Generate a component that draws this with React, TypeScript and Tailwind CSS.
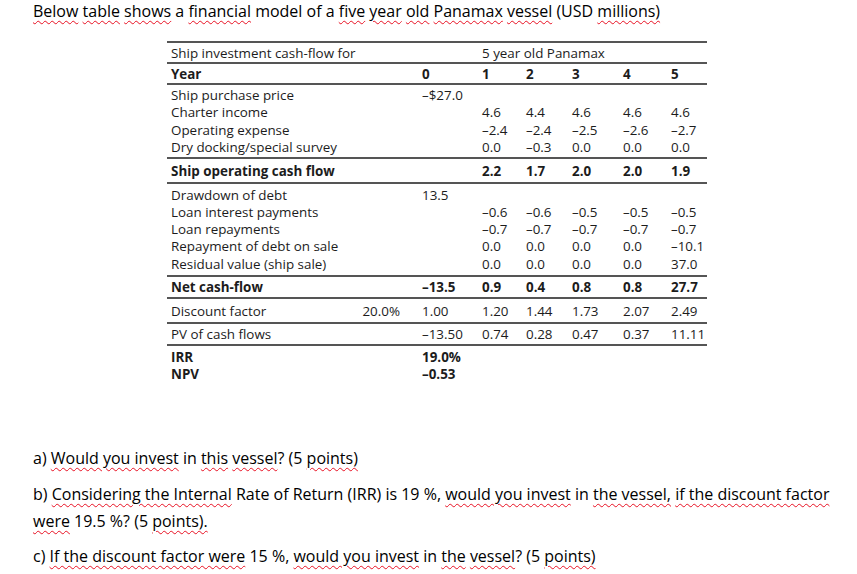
import React from "react";

type Cell = string;
const cols = "grid grid-cols-[190px_65px_60px_44px_46px_51px_48px_36px]";

function Cells({ cells }: { cells: Cell[] }) {
  return (
    <>
      <div className="pl-[4px] whitespace-nowrap">{cells[0] ?? ""}</div>
      <div className="text-right pr-[22px] whitespace-nowrap">{cells[1] ?? ""}</div>
      <div className="whitespace-nowrap">{cells[2] ?? ""}</div>
      <div className="whitespace-nowrap">{cells[3] ?? ""}</div>
      <div className="whitespace-nowrap">{cells[4] ?? ""}</div>
      <div className="whitespace-nowrap">{cells[5] ?? ""}</div>
      <div className="whitespace-nowrap">{cells[6] ?? ""}</div>
      <div className="whitespace-nowrap">{cells[7] ?? ""}</div>
    </>
  );
}

const block1: Cell[][] = [
  ["Ship purchase price", "", "–$27.0"],
  ["Charter income", "", "", "4.6", "4.4", "4.6", "4.6", "4.6"],
  ["Operating expense", "", "", "–2.4", "–2.4", "–2.5", "–2.6", "–2.7"],
  ["Dry docking/special survey", "", "", "0.0", "–0.3", "0.0", "0.0", "0.0"],
];

const block2: Cell[][] = [
  ["Drawdown of debt", "", "13.5"],
  ["Loan interest payments", "", "", "–0.6", "–0.6", "–0.5", "–0.5", "–0.5"],
  ["Loan repayments", "", "", "–0.7", "–0.7", "–0.7", "–0.7", "–0.7"],
  ["Repayment of debt on sale", "", "", "0.0", "0.0", "0.0", "0.0", "–10.1"],
  ["Residual value (ship sale)", "", "", "0.0", "0.0", "0.0", "0.0", "37.0"],
];

function U({ children }: { children: React.ReactNode }) {
  return (
    <span className="underline decoration-wavy decoration-[#e81123] decoration-1 underline-offset-[3px]">
      {children}
    </span>
  );
}

export default function App() {
  return (
    <div className="w-[857px] h-[574px] bg-white overflow-hidden text-black [font-variant-ligatures:none]">
      <p className="pl-[33px] pt-[1px] text-[16px] leading-[20px] font-['Open_Sans',sans-serif] whitespace-nowrap">
        <U>Below</U> <U>table</U> <U>shows</U> a <U>financial</U> model of a <U>five</U> <U>year</U> <U>old</U>{" "}
        <U>Panamax</U> <U>vessel</U> (USD <U>millions)</U>
      </p>

      <div className="ml-[167px] mt-[20px] w-[540px] text-[13.4px] text-[#1c1c1c] font-['Open_Sans',sans-serif]">
        {/* header */}
        <div className={`${cols} border-t-2 border-[#555] h-[21px] items-center`}>
          <div className="pl-[4px] col-span-3 whitespace-nowrap">Ship investment cash-flow for</div>
          <div className="col-span-5 whitespace-nowrap">5 year old Panamax</div>
        </div>
        <div className={`${cols} border-t-2 border-[#555] h-[21px] items-center font-bold`}>
          <Cells cells={["Year", "", "0", "1", "2", "3", "4", "5"]} />
        </div>
        <div className={`${cols} border-t-2 border-[#555] pt-[2px] pb-[1px] leading-[17.3px]`}>
          {block1.map((r, i) => (
            <Cells key={i} cells={r} />
          ))}
        </div>
        <div className={`${cols} border-t-2 border-[#555] h-[25px] items-center font-bold`}>
          <Cells cells={["Ship operating cash flow", "", "", "2.2", "1.7", "2.0", "2.0", "1.9"]} />
        </div>
        <div className={`${cols} border-t-2 border-[#555] pt-[2.5px] pb-[2.25px] leading-[17.25px]`}>
          {block2.map((r, i) => (
            <Cells key={i} cells={r} />
          ))}
        </div>
        <div className={`${cols} border-t-2 border-[#555] h-[22px] items-center font-bold`}>
          <Cells cells={["Net cash-flow", "", "–13.5", "0.9", "0.4", "0.8", "0.8", "27.7"]} />
        </div>
        <div className={`${cols} border-t-2 border-[#555] h-[25px] items-center`}>
          <Cells cells={["Discount factor", "20.0%", "1.00", "1.20", "1.44", "1.73", "2.07", "2.49"]} />
        </div>
        <div className={`${cols} border-t-2 border-[#555] h-[22px] items-center`}>
          <Cells cells={["PV of cash flows", "", "–13.50", "0.74", "0.28", "0.47", "0.37", "11.11"]} />
        </div>
        <div className={`${cols} border-t-2 border-[#555] pt-[3px] leading-[17px] font-bold`}>
          <Cells cells={["IRR", "", "19.0%"]} />
          <Cells cells={["NPV", "", "–0.53"]} />
        </div>
      </div>

      <div className="pl-[33px] mt-[62px] text-[16px] leading-[27px] font-['Open_Sans',sans-serif] whitespace-nowrap">
        <p>
          a) <U>Would you invest</U> in <U>this</U> <U>vessel</U>? (5 <U>points)</U>
        </p>
        <p className="mt-[9px]">
          b) <U>Considering the Internal</U> Rate of Return (IRR) is 19 %, <U>would you invest</U> in{" "}
          <U>the vessel,</U> <U>if the discount factor</U>
          <br />
          <U>were</U> 19.5 %? (5 <U>points).</U>
        </p>
        <p className="mt-[8px]">
          c) <U>If the discount factor were</U> 15 %, <U>would you invest</U> in <U>the</U> <U>vessel</U>? (5{" "}
          <U>points)</U>
        </p>
      </div>
    </div>
  );
}
